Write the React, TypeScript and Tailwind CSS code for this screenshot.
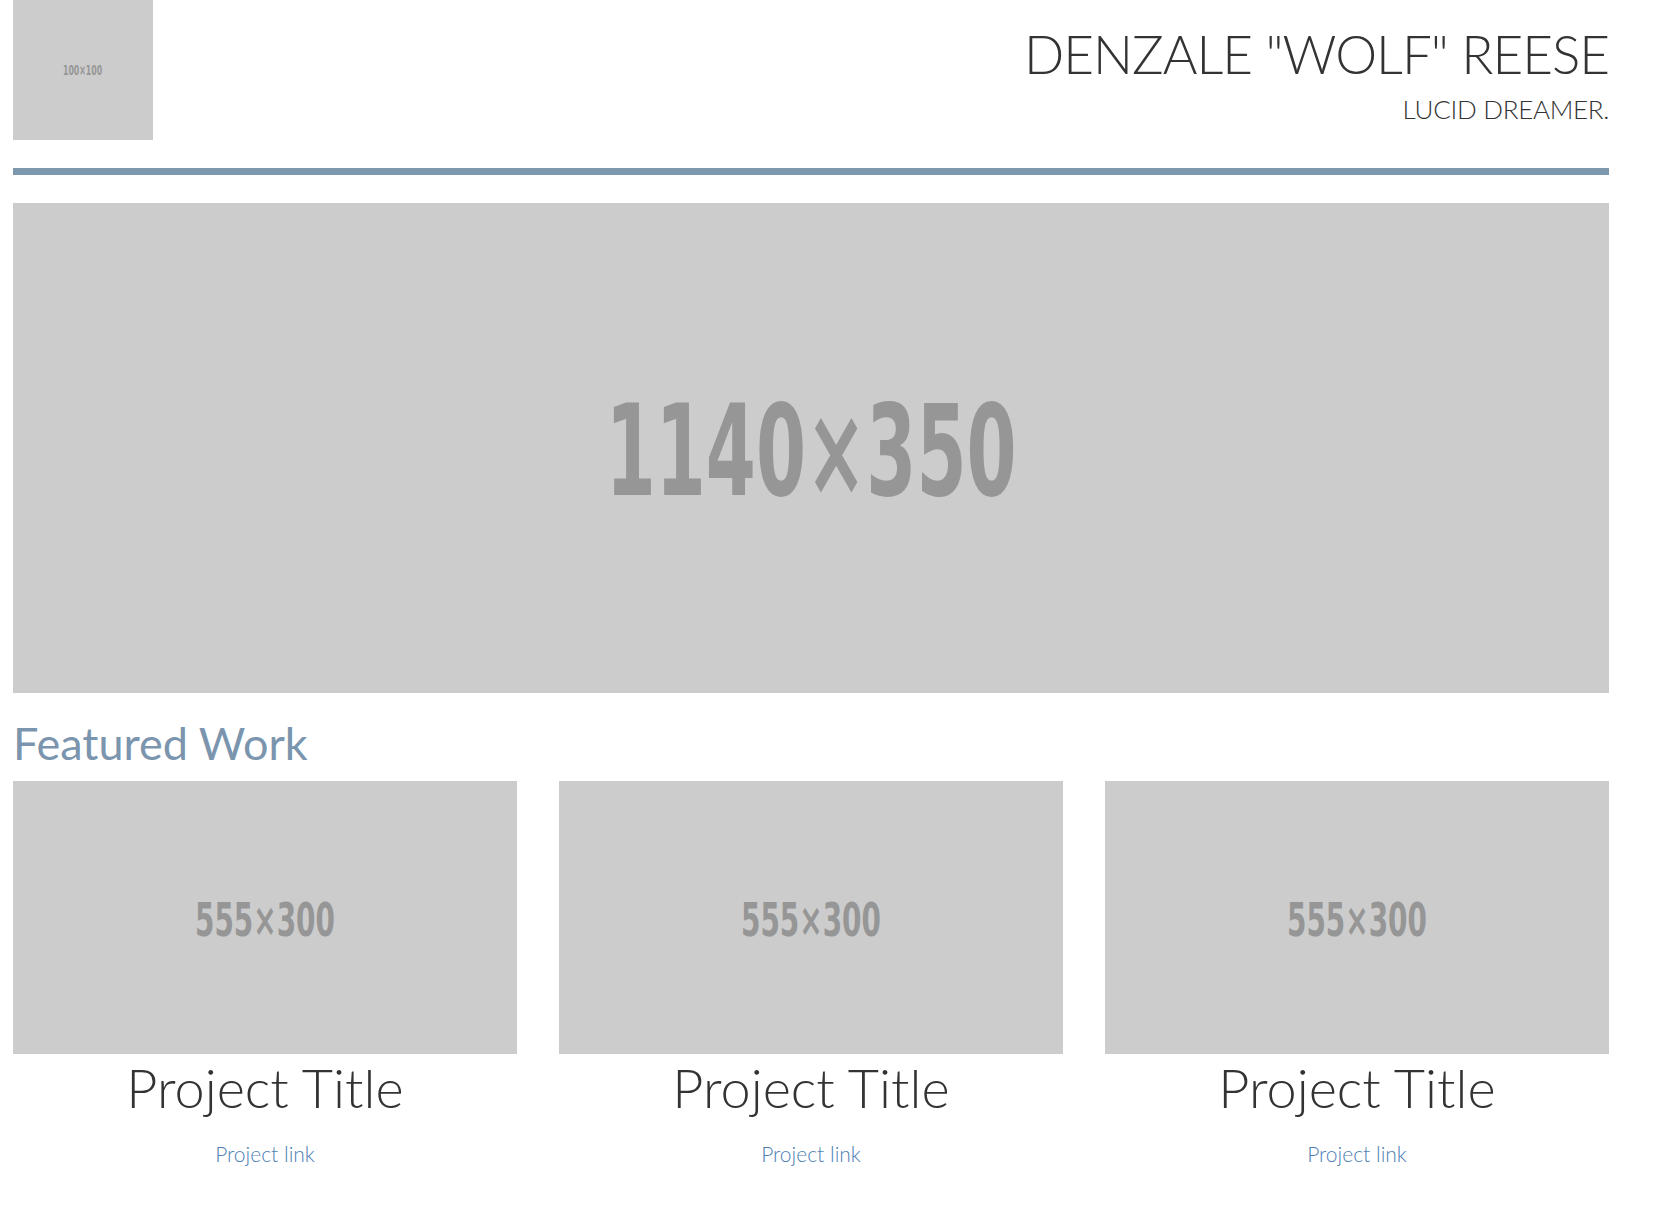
import React from "react";

function Placeholder({ label, className, textClass }: { label: string; className: string; textClass: string }) {
  return (
    <div className={`flex items-center justify-center overflow-hidden bg-[#cccccc] ${className}`}>
      <span
        className={`font-bold text-[#969696] leading-none whitespace-nowrap ${textClass}`}
        style={{ fontFamily: '"DejaVu Sans Condensed", "DejaVu Sans", sans-serif' }}
      >
        {label}
      </span>
    </div>
  );
}

export default function App() {
  const font = { fontFamily: 'Lato, "Open Sans", sans-serif' };
  return (
    <div className="min-h-[1208px] bg-white px-[13px] text-[#333333]" style={font}>
      <header className="flex justify-between w-[1596px]">
        <Placeholder label="100×100" className="w-[140px] h-[140px]" textClass="text-[14px] scale-x-[0.62] text-[#9a9a9a]" />
        <div className="flex flex-col items-end">
          <h1 className="mt-[27px] text-[53px] font-light leading-none tracking-[-1px]">DENZALE "WOLF" REESE</h1>
          <h3 className="mt-[16px] text-[26px] font-light leading-none tracking-[-0.3px]">LUCID DREAMER.</h3>
        </div>
      </header>
      <div className="mt-[28px] h-[7px] w-[1596px] bg-[#7d97ad]" />
      <Placeholder label="1140×350" className="mt-[28px] w-[1596px] h-[490px]" textClass="text-[127px] scale-x-[0.63] translate-y-[3px]" />
      <h2 className="mt-[28px] text-[45px] font-normal leading-none text-[#7a95ad]">Featured Work</h2>
      <div className="mt-[15px] grid grid-cols-3 gap-[42px] w-[1596px]">
        {[0, 1, 2].map((i) => (
          <div key={i} className="flex flex-col items-center">
            <Placeholder label="555×300" className="w-full h-[273px]" textClass="text-[47px] scale-x-[0.66] translate-y-[2px]" />
            <div className="mt-[7px] text-[54px] font-light leading-none">Project Title</div>
            <a className="mt-[28px] text-[21px] font-light leading-none text-[#4d7fb5]">Project link</a>
          </div>
        ))}
      </div>
    </div>
  );
}
